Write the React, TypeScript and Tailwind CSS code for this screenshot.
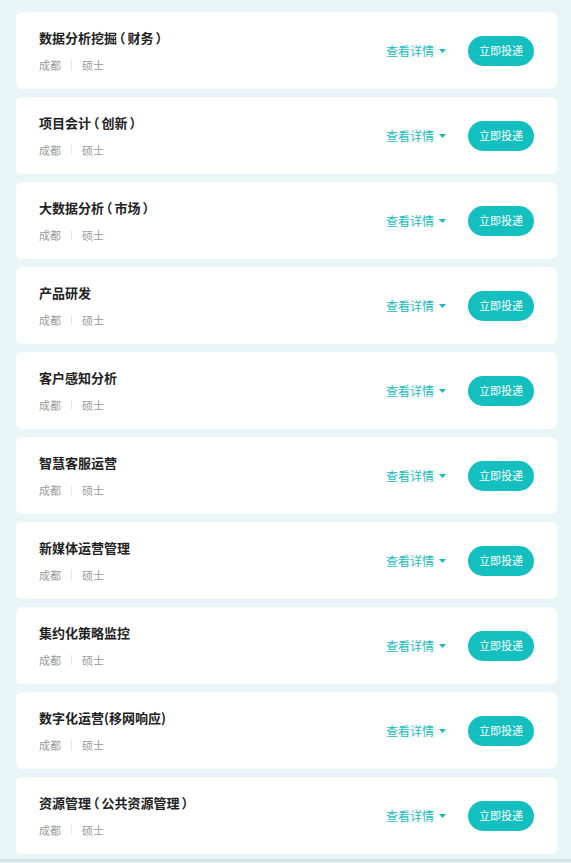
const jobs = [
  "数据分析挖掘（财务）",
  "项目会计（创新）",
  "大数据分析（市场）",
  "产品研发",
  "客户感知分析",
  "智慧客服运营",
  "新媒体运营管理",
  "集约化策略监控",
  "数字化运营(移网响应)",
  "资源管理（公共资源管理）",
];

const font = `font-['Microsoft_YaHei','Noto_Sans_CJK_SC',sans-serif]`;

// full-width parens get a little air on both sides, like the original
function Title({ text }: { text: string }) {
  const parts = text.split(/([（）])/);
  return (
    <p className="h-5 text-[13px] leading-5 font-semibold text-[#222] [font-feature-settings:'halt']">
      {parts.map((p, i) =>
        p === "（" || p === "）" ? (
          <span key={i} className="px-[2px]">
            {p}
          </span>
        ) : (
          <span key={i}>{p}</span>
        )
      )}
    </p>
  );
}

function JobCard({ title }: { title: string }) {
  return (
    <div className="flex h-[77px] items-center justify-between rounded-[6px] bg-white pr-[23px] pl-[23px]">
      <div className="flex flex-col">
        <Title text={title} />
        <div className="mt-[9px] flex h-4 items-center text-[11px] leading-4 text-[#9a9a9a]">
          <span>成都</span>
          <span className="mx-[10px] h-[10px] w-px bg-[#e6e6e6]" />
          <span>硕士</span>
        </div>
      </div>
      <div className="flex items-center">
        <button className="flex items-center text-[12px] text-[#17bcbf]">
          查看详情
          <svg width="7" height="4" viewBox="0 0 7 4" className="ml-[5px]">
            <path d="M0 0h7L3.5 4z" fill="#17bcbf" />
          </svg>
        </button>
        <button className="ml-[22px] h-[30px] w-[66px] rounded-full bg-[#13bfbf] text-[11px] text-white">
          立即投递
        </button>
      </div>
    </div>
  );
}

export default function App() {
  return (
    <div className={`${font} min-h-screen bg-[#e8f6f7]`}>
      <div className="flex flex-col gap-2 pt-3 pr-[14px] pb-[5px] pl-4">
        {jobs.map((j) => (
          <JobCard key={j} title={j} />
        ))}
      </div>
      <div className="h-[3px] bg-[#d4dfe6]" />
    </div>
  );
}
